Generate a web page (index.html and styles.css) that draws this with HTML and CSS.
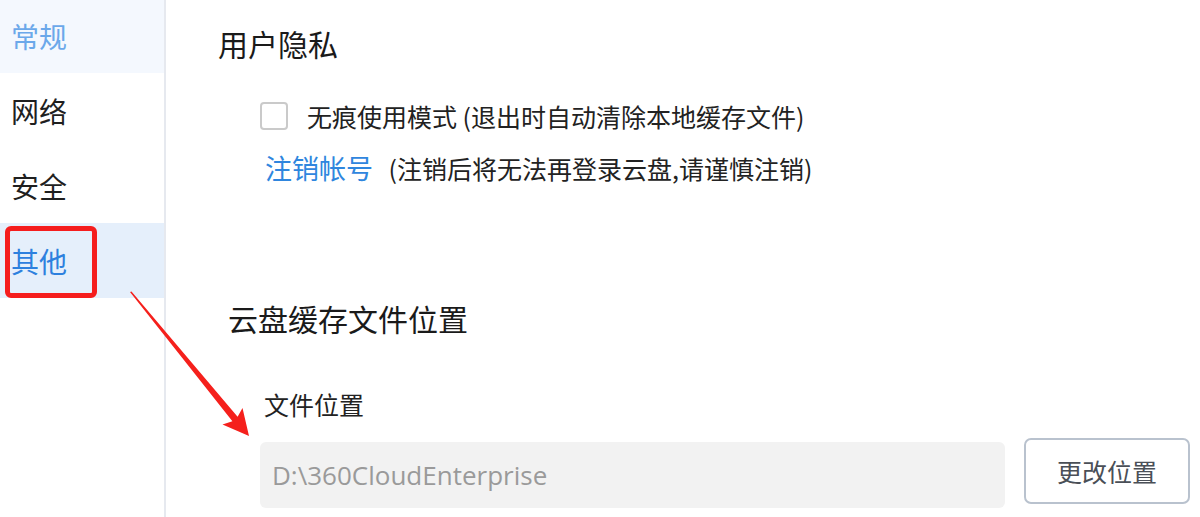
FILE: index.html
```html
<!DOCTYPE html>
<html lang="zh-CN">
<head>
<meta charset="utf-8">
<title>设置 - 其他</title>
<link rel="stylesheet" href="styles.css">
</head>
<body>
<div class="window">
  <nav class="sidebar">
    <div class="nav-item nav-hover">常规</div>
    <div class="nav-item">网络</div>
    <div class="nav-item">安全</div>
    <div class="nav-item nav-active">其他</div>
  </nav>
  <main class="main">
    <h2 class="section-title">用户隐私</h2>
    <label class="option">
      <span class="checkbox"></span>
      <span class="option-text">无痕使用模式 (退出时自动清除本地缓存文件)</span>
    </label>
    <div class="link-row">
      <a class="link">注销帐号</a>
      <span class="hint">(注销后将无法再登录云盘,请谨慎注销)</span>
    </div>
    <h2 class="section-title section-title-2">云盘缓存文件位置</h2>
    <div class="field-label">文件位置</div>
    <div class="path-row">
      <div class="path-input">D:\360CloudEnterprise</div>
      <button class="btn">更改位置</button>
    </div>
  </main>
</div>
<div class="highlight-box"></div>
<svg class="arrow" width="1200" height="517" viewBox="0 0 1200 517">
  <polygon fill="#f5201c" points="130,292 131.5,291.5 237.6,416.8 242.5,408 249,436 222.5,424.5 232.4,421.2"/>
</svg>
</body>
</html>
```
FILE: styles.css
```css
html, body {
  margin: 0;
  padding: 0;
  background: #fff;
  overflow: hidden;
}
body {
  width: 1200px;
  height: 517px;
  position: relative;
  font-family: "Noto Sans CJK SC", "Noto Sans", sans-serif;
  color: #222;
}
.window {
  display: flex;
  height: 517px;
}
.sidebar {
  width: 164px;
  flex: none;
  border-right: 2px solid #e6e9ef;
  margin-top: -2px;
}
.nav-item {
  height: 75px;
  display: flex;
  align-items: center;
  padding-left: 11px;
  font-size: 28px;
  color: #1f1f1f;
}
.nav-hover {
  background: #f4f8fe;
  color: #6ba8ea;
}
.nav-active {
  background: #e5effb;
  color: #2d80de;
}
.main {
  flex: 1;
  padding-left: 52px;
}
.section-title {
  margin: 23px 0 0;
  font-weight: 400;
  font-size: 30px;
  line-height: 40px;
  height: 40px;
  color: #1a1a1a;
}
.option {
  display: flex;
  align-items: center;
  margin-top: 39px;
  height: 28px;
  padding-left: 42px;
}
.checkbox {
  width: 24px;
  height: 24px;
  border: 2px solid #cacaca;
  border-radius: 4px;
  flex: none;
}
.option-text {
  margin-left: 19px;
  font-size: 25px;
  line-height: 28px;
  color: #222;
}
.link-row {
  margin-top: 22px;
  height: 32px;
  line-height: 32px;
  padding-left: 47px;
  font-size: 25px;
}
.link {
  color: #2f86de;
  font-size: 27px;
  margin-right: 10px;
}
.hint {
  color: #222;
}
.section-title-2 {
  margin-top: 114px;
  padding-left: 10px;
}
.field-label {
  margin-top: 51px;
  padding-left: 46px;
  height: 30px;
  line-height: 30px;
  font-size: 25px;
  color: #222;
}
.path-row {
  display: flex;
  align-items: flex-start;
  margin-top: 19px;
  padding-left: 42px;
}
.path-input {
  margin-top: 4px;
  width: 745px;
  height: 66px;
  padding-left: 12px;
  box-sizing: border-box;
  background: #f2f2f2;
  border-radius: 6px;
  display: flex;
  align-items: center;
  font-family: "Open Sans", "Noto Sans", sans-serif;
  font-size: 26px;
  color: #9a9a9a;
}
.btn {
  margin-left: 19px;
  width: 166px;
  height: 66px;
  background: #fff;
  border: 2px solid #b9c2ce;
  border-radius: 7px;
  font-family: "Noto Sans CJK SC", sans-serif;
  font-size: 25px;
  color: #4a4f57;
  padding: 0;
}
.highlight-box {
  position: absolute;
  left: 5px;
  top: 226px;
  width: 82px;
  height: 62px;
  border: 5px solid #f51d1d;
  border-radius: 6px;
}
.arrow {
  position: absolute;
  left: 0;
  top: 0;
  pointer-events: none;
}
```
